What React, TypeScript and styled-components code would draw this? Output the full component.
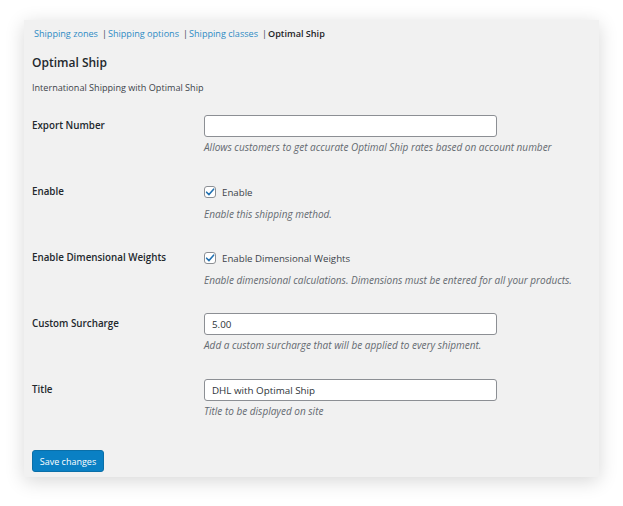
import React from "react";
import styled, { createGlobalStyle } from "styled-components";

const Global = createGlobalStyle`
  html, body { margin: 0; padding: 0; background: #ffffff; }
  body { font-family: "Open Sans", "Noto Sans", Arial, sans-serif; }
  * { box-sizing: border-box; }
`;

const Page = styled.div`
  padding: 20px 24px 29px 24px;
`;

const Panel = styled.div`
  width: 575px;
  background: #f1f1f1;
  padding: 4px 8px 5px 8px;
  box-shadow: 0 4px 18px rgba(0, 0, 0, 0.16);
  display: flex;
  flex-direction: column;
`;

const Nav = styled.nav`
  height: 20px;
  line-height: 20px;
  font-size: 9.1px;
  color: #50575e;
  padding-left: 2px;
  white-space: nowrap;
`;

const NavLink = styled.a`
  color: #2e8bc4;
  text-decoration: none;
`;

const NavCurrent = styled.span`
  color: #1d2327;
  font-weight: 600;
`;

const Sep = styled.span`
  color: #3c434a;
  margin: 0 1px 0 4px;
`;

const Heading = styled.h2`
  margin: 9px 0 0 0;
  height: 20px;
  line-height: 20px;
  font-size: 12px;
  font-weight: 600;
  color: #23282d;
`;

const Intro = styled.p`
  margin: 5px 0 0 0;
  height: 20px;
  line-height: 20px;
  font-size: 9.1px;
  color: #3c434a;
`;

const Form = styled.div`
  margin-top: 17px;
  display: flex;
  flex-direction: column;
`;

const Row = styled.div`
  display: grid;
  grid-template-columns: 172px 1fr;
  height: 66px;
  align-items: start;
`;

const Label = styled.div`
  line-height: 22px;
  font-size: 9.8px;
  font-weight: 600;
  color: #23282d;
`;

const Field = styled.div`
  display: flex;
  flex-direction: column;
`;

const TextInput = styled.input`
  width: 293px;
  height: 22px;
  border: 1px solid #8c8f94;
  border-radius: 3px;
  background: #ffffff;
  padding: 0 7px;
  font-family: inherit;
  font-size: 9.8px;
  color: #2c3338;
  outline: none;
`;

const Desc = styled.p<{ $gap: number }>`
  margin: ${(p) => p.$gap}px 0 0 0;
  line-height: 20px;
  font-size: 10px;
  font-style: italic;
  color: #646970;
  white-space: nowrap;
`;

const CheckLine = styled.label`
  display: flex;
  align-items: center;
  height: 22px;
  gap: 6px;
  font-size: 9.7px;
  color: #3c434a;
`;

const Box = styled.span`
  width: 12px;
  height: 12px;
  border: 1px solid #8c8f94;
  border-radius: 3px;
  background: #ffffff;
  display: inline-flex;
  align-items: center;
  justify-content: center;
`;

const SaveButton = styled.button`
  margin-top: 5px;
  align-self: flex-start;
  width: 72px;
  height: 22px;
  border: 1px solid #0a6fa8;
  border-radius: 3px;
  background: #0a80c4;
  color: #ffffff;
  font-family: inherit;
  font-size: 9px;
  padding: 0;
`;

const Check = () => (
  <Box>
    <svg width="10" height="10" viewBox="0 0 10 10">
      <path d="M1.6 5.2 L4 7.6 L8.6 2.2" fill="none" stroke="#2271b1" strokeWidth="1.6" strokeLinecap="round" strokeLinejoin="round" />
    </svg>
  </Box>
);

export default function App() {
  return (
    <>
      <Global />
      <Page>
        <Panel>
          <Nav>
            <NavLink href="#">Shipping zones</NavLink>
            <Sep>|</Sep>
            <NavLink href="#">Shipping options</NavLink>
            <Sep>|</Sep>
            <NavLink href="#">Shipping classes</NavLink>
            <Sep>|</Sep>
            <NavCurrent>Optimal Ship</NavCurrent>
          </Nav>
          <Heading>Optimal Ship</Heading>
          <Intro>International Shipping with Optimal Ship</Intro>
          <Form>
            <Row>
              <Label>Export Number</Label>
              <Field>
                <TextInput defaultValue="" />
                <Desc $gap={0}>Allows customers to get accurate Optimal Ship rates based on account number</Desc>
              </Field>
            </Row>
            <Row>
              <Label>Enable</Label>
              <Field>
                <CheckLine>
                  <Check />
                  Enable
                </CheckLine>
                <Desc $gap={1}>Enable this shipping method.</Desc>
              </Field>
            </Row>
            <Row>
              <Label>Enable Dimensional Weights</Label>
              <Field>
                <CheckLine>
                  <Check />
                  Enable Dimensional Weights
                </CheckLine>
                <Desc $gap={1}>Enable dimensional calculations. Dimensions must be entered for all your products.</Desc>
              </Field>
            </Row>
            <Row>
              <Label>Custom Surcharge</Label>
              <Field>
                <TextInput defaultValue="5.00" />
                <Desc $gap={0}>Add a custom surcharge that will be applied to every shipment.</Desc>
              </Field>
            </Row>
            <Row>
              <Label>Title</Label>
              <Field>
                <TextInput defaultValue="DHL with Optimal Ship" />
                <Desc $gap={0}>Title to be displayed on site</Desc>
              </Field>
            </Row>
          </Form>
          <SaveButton>Save changes</SaveButton>
        </Panel>
      </Page>
    </>
  );
}
